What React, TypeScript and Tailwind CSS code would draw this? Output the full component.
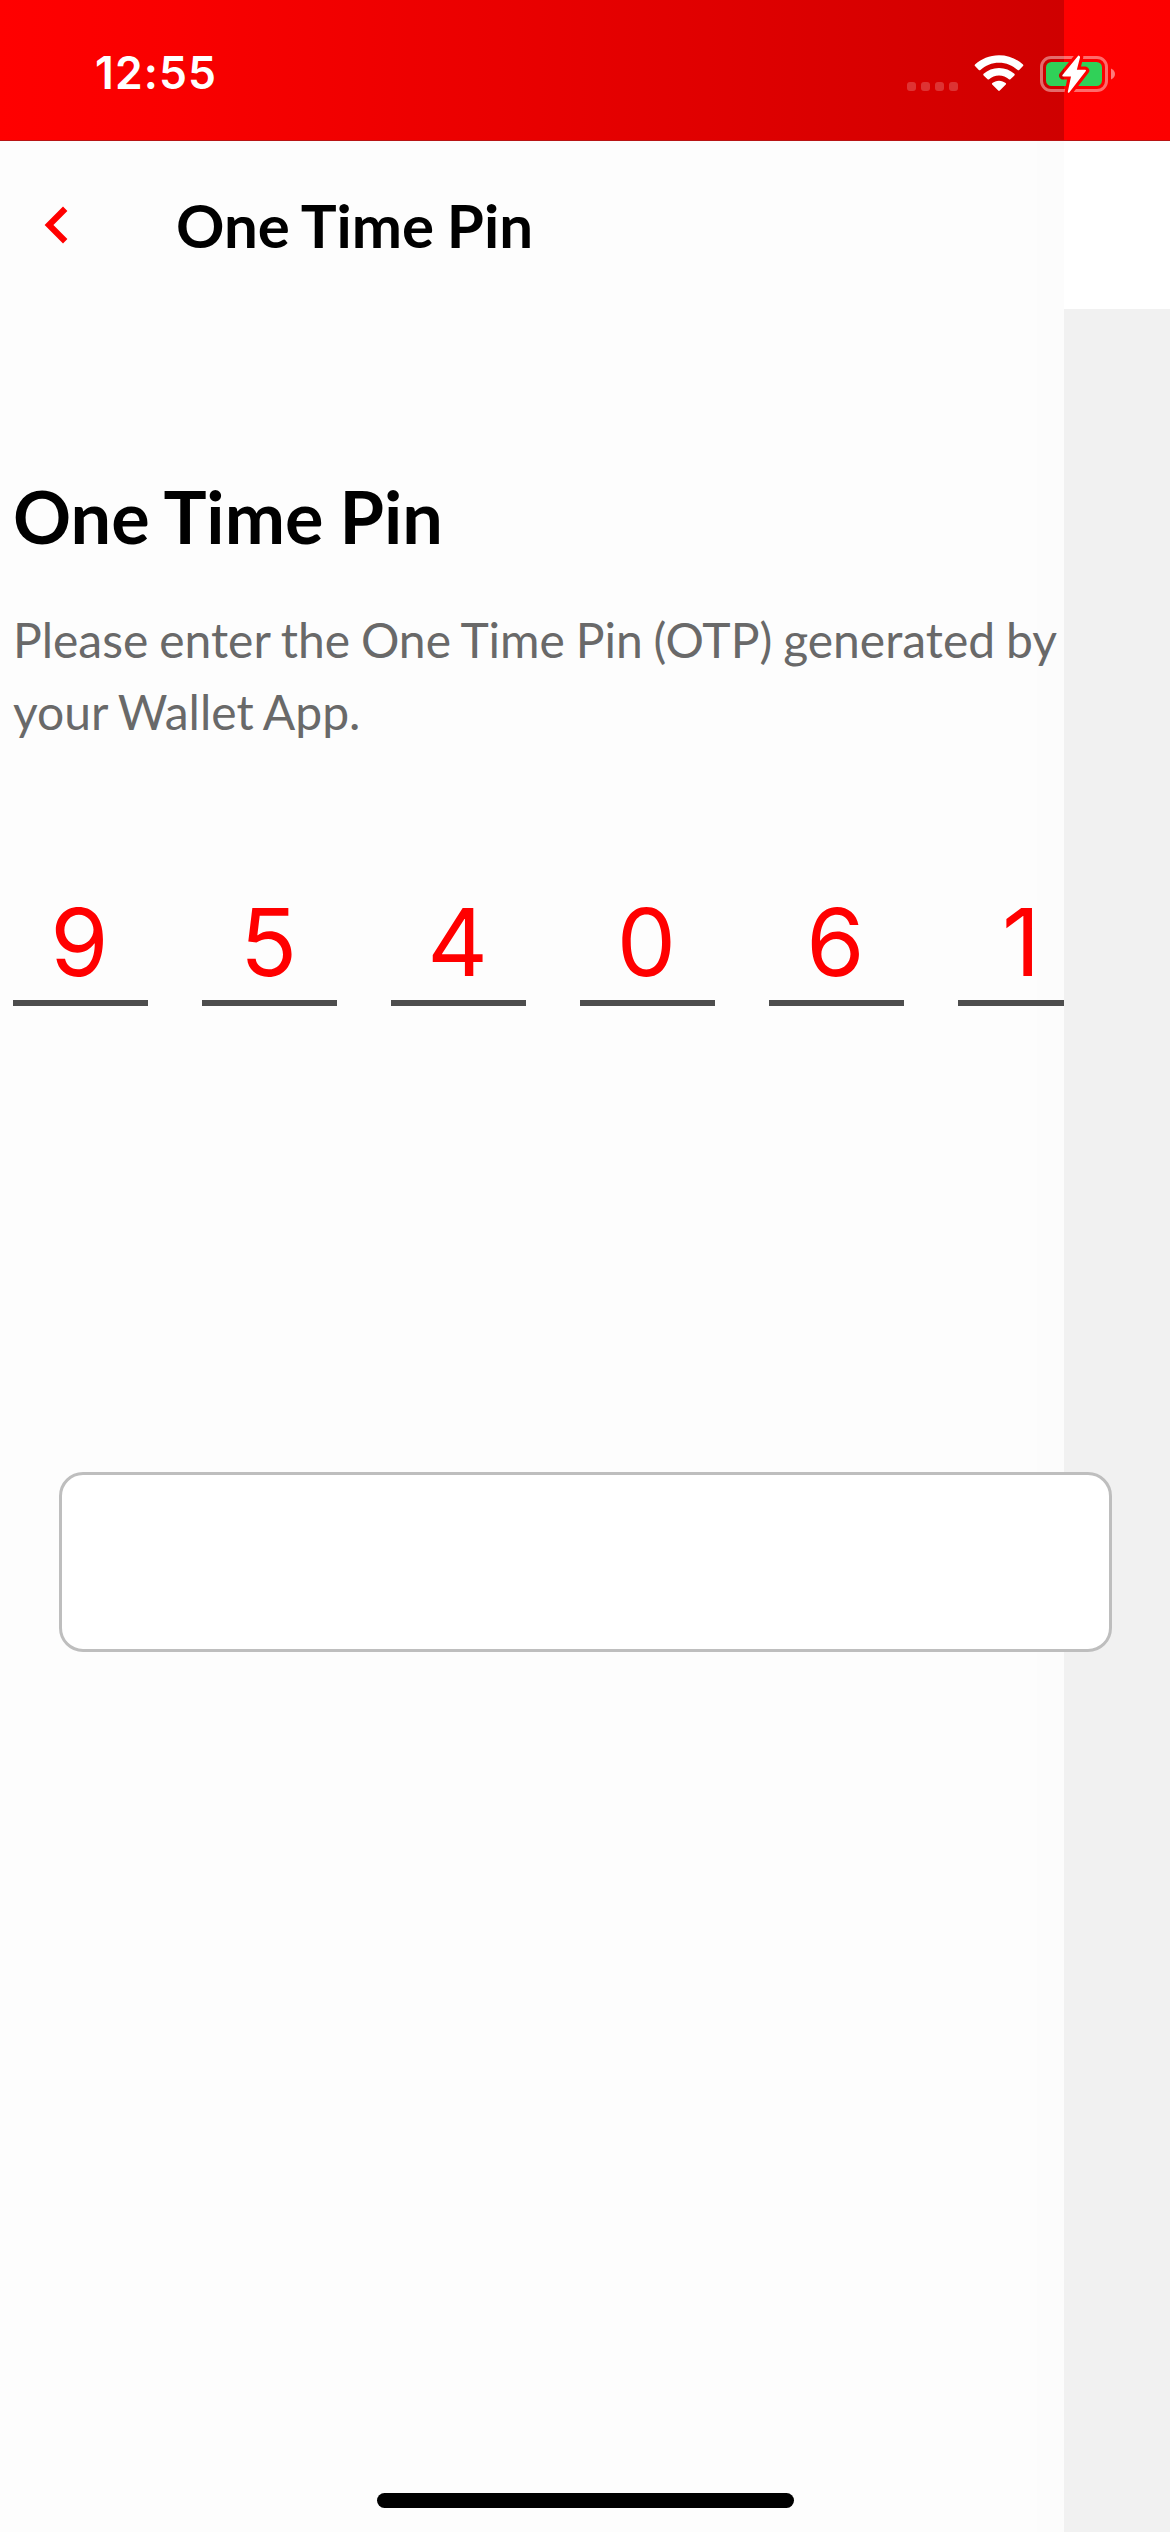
const DIGITS = ["9", "5", "4", "0", "6", "1"];

function SignalDots() {
  return (
    <div className="flex gap-[5px] pt-[26px]">
      {[0, 1, 2, 3].map((i) => (
        <span key={i} className="size-[9px] rounded-[3px] bg-white/20" />
      ))}
    </div>
  );
}

function WifiIcon() {
  return (
    <svg width="50" height="38" viewBox="0 0 50 38" fill="#fff">
      <path d="M25 0.2C34.5 0.2 42.9 3.8 49 9.6Q49.7 10.4 49 11.1L45.2 15Q44.4 15.7 43.6 15C38.7 10.4 32.2 7.7 25 7.7S11.3 10.4 6.4 15Q5.6 15.7 4.8 15L1 11.1Q0.3 10.4 1 9.6C7.1 3.8 15.5 0.2 25 0.2Z" />
      <path d="M25 12.9C31 12.9 36.4 15.1 40.4 18.8Q41.2 19.6 40.4 20.4L36.4 24.3Q35.7 24.9 34.9 24.3C32.3 22 28.8 20.5 25 20.5S17.7 22 15.1 24.3Q14.3 24.9 13.6 24.3L9.6 20.4Q8.8 19.6 9.6 18.8C13.6 15.1 19 12.9 25 12.9Z" />
      <path d="M25 25.7C27.6 25.7 29.9 26.6 31.7 28.1Q32.5 28.8 31.8 29.5L25.8 35.6Q25 36.3 24.2 35.6L18.2 29.5Q17.5 28.8 18.3 28.1C20.1 26.6 22.4 25.7 25 25.7Z" />
    </svg>
  );
}

function BatteryIcon() {
  const bolt = "M38.6 0.4L23.1 19.6H32L28.6 36L45.2 14.6H35.8L39.3 1Z";
  return (
    <svg className="overflow-visible" width="76" height="38" viewBox="0 0 76 38">
      <mask id="bolt-gap" maskUnits="userSpaceOnUse" x="0" y="0" width="76" height="38">
        <rect width="76" height="38" fill="#fff" />
        <path d={bolt} fill="#000" stroke="#000" strokeWidth="8" strokeLinejoin="round" />
      </mask>
      <g mask="url(#bolt-gap)">
        <rect x="1.5" y="1.5" width="65" height="33" rx="9.5" fill="none" stroke="#fff" strokeOpacity="0.42" strokeWidth="3" />
        <rect x="6" y="6" width="56" height="24" rx="5.5" fill="#30d158" />
      </g>
      <path d="M71 12.5C73.5 13.4 75 15.6 75 18S73.5 22.6 71 23.5Z" fill="#fff" fillOpacity="0.48" />
      <path d={bolt} fill="#fff" stroke="#fff" strokeWidth="1.6" strokeLinejoin="round" />
    </svg>
  );
}

function StatusBar() {
  return (
    <header className="flex h-[141px] items-start justify-between border-b border-[#b81414] bg-[linear-gradient(90deg,#ff0000_0px,#f90000_180px,#cf0000_1064px,#ff0000_1064px,#fc0000_1170px)] pr-[54px] pl-[95px]">
      <time className="pt-[45px] font-['Inter',sans-serif] text-[44.5px] leading-[57px] font-semibold tracking-[1.1px] text-white">
        12:55
      </time>
      <div className="flex items-start pt-[56px]">
        <SignalDots />
        <div className="-mt-px ml-[16px]">
          <WifiIcon />
        </div>
        <div className="ml-[16px]">
          <BatteryIcon />
        </div>
      </div>
    </header>
  );
}

export default function App() {
  return (
    <div className="flex h-[2532px] w-[1170px] flex-col overflow-hidden bg-white font-['Lato',sans-serif]">
      <StatusBar />
      <div className="flex flex-1">
        <main className="relative z-10 flex w-[1064px] shrink-0 flex-col bg-[linear-gradient(90deg,#fdfdfd_1037px,#fcfcfc_1037px)]">
          <nav className="flex h-[168px] items-center pl-[44px]">
            <svg width="24" height="38" viewBox="0 0 24 38" fill="none" stroke="#ff0000" strokeWidth="6.2">
              <path d="M21.2 2.8L5 19L21.2 35.2" />
            </svg>
            <span className="ml-[108px] text-[60px] leading-[72px] font-bold text-black [word-spacing:-0.03em]">
              One Time Pin
            </span>
          </nav>
          <h1 className="mt-[164px] pl-[13px] text-[72px] leading-[86px] font-bold text-black [word-spacing:-0.02em]">
            One Time Pin
          </h1>
          <p className="mt-[45px] pl-[13px] text-[48px] leading-[72px] whitespace-nowrap text-[#696969] [word-spacing:-0.03em]">
            Please enter the One Time Pin (OTP) generated by
            <br />
            your Wallet App.
          </p>
          <div className="mt-[128px] flex gap-[54px] overflow-hidden pl-[13px]">
            {DIGITS.map((d, i) => (
              <div
                key={i}
                className={`h-[130px] w-[135px] shrink-0 border-b-[6px] border-[#4d4d4d] text-center font-['Inter',sans-serif] text-[94px] leading-[133px] text-[#ff0000] ${
                  d === "1" ? "pr-[9px]" : "pr-[2px]"
                }`}
              >
                {d}
              </div>
            ))}
          </div>
          <div className="mt-[466px] ml-[59px] h-[180px] w-[1053px] rounded-[24px] border-[3px] border-[#bebebe] bg-white" />
          <div className="mt-auto mb-[24px] ml-[377px] h-[15px] w-[417px] rounded-full bg-black" />
        </main>
        <aside className="flex flex-1 flex-col bg-[#f1f1f1]">
          <div className="h-[168px] bg-white" />
        </aside>
      </div>
    </div>
  );
}
